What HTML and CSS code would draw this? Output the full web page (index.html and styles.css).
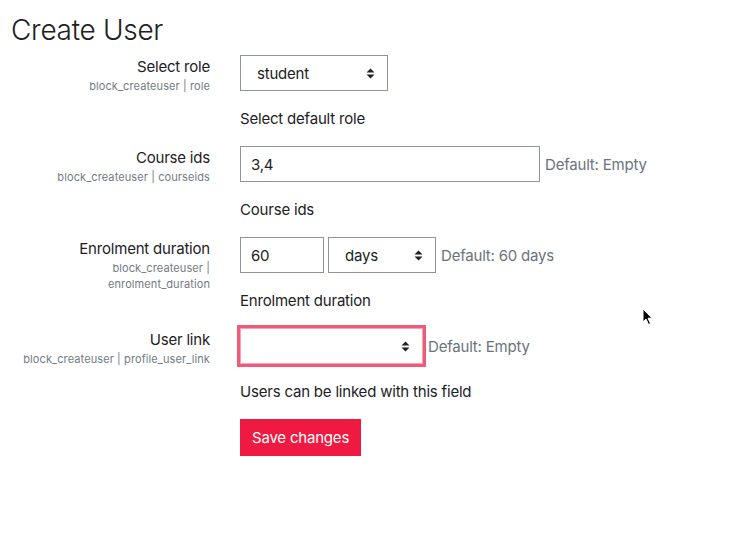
FILE: index.html
```html
<!DOCTYPE html>
<html>
<head>
<meta charset="utf-8">
<link rel="stylesheet" href="styles.css">
</head>
<body>
<div class="page">
  <h1 class="title">Create User</h1>
  <form class="settings">
    <div class="row">
      <div class="label-cell">
        <div class="label">Select role</div>
        <div class="ident">block_createuser | role</div>
      </div>
      <div class="control-cell">
        <div class="controls">
          <div class="select w-role"><span>student</span><svg class="caret" width="9" height="11" viewBox="0 0 9 11"><path d="M4.5 0.5 L8.5 4.5 L0.5 4.5 Z M0.5 6.5 L8.5 6.5 L4.5 10.5 Z" fill="#1d2125"/></svg></div>
        </div>
        <div class="desc">Select default role</div>
      </div>
    </div>

    <div class="row">
      <div class="label-cell">
        <div class="label">Course ids</div>
        <div class="ident">block_createuser | courseids</div>
      </div>
      <div class="control-cell">
        <div class="controls">
          <div class="input w-course">3,4</div>
          <span class="default">Default: Empty</span>
        </div>
        <div class="desc">Course ids</div>
      </div>
    </div>

    <div class="row">
      <div class="label-cell">
        <div class="label">Enrolment duration</div>
        <div class="ident">block_createuser |<br>enrolment_duration</div>
      </div>
      <div class="control-cell">
        <div class="controls">
          <div class="input w-num">60</div>
          <div class="select w-days"><span>days</span><svg class="caret" width="9" height="11" viewBox="0 0 9 11"><path d="M4.5 0.5 L8.5 4.5 L0.5 4.5 Z M0.5 6.5 L8.5 6.5 L4.5 10.5 Z" fill="#1d2125"/></svg></div>
          <span class="default">Default: 60 days</span>
        </div>
        <div class="desc">Enrolment duration</div>
      </div>
    </div>

    <div class="row">
      <div class="label-cell">
        <div class="label">User link</div>
        <div class="ident">block_createuser | profile_user_link</div>
      </div>
      <div class="control-cell">
        <div class="controls">
          <div class="select w-link focused"><span></span><svg class="caret" width="9" height="11" viewBox="0 0 9 11"><path d="M4.5 0.5 L8.5 4.5 L0.5 4.5 Z M0.5 6.5 L8.5 6.5 L4.5 10.5 Z" fill="#1d2125"/></svg></div>
          <span class="default">Default: Empty</span>
        </div>
        <div class="desc">Users can be linked with this field</div>
      </div>
    </div>

    <div class="row">
      <div class="label-cell"></div>
      <div class="control-cell">
        <button type="button" class="btn">Save changes</button>
      </div>
    </div>
  </form>
</div>
<svg class="cursor" width="12" height="18" viewBox="0 0 12 18"><path d="M1 1 L1 14 L4 11 L6.5 16.5 L8.5 15.5 L6 10.2 L10 10.2 Z" fill="#000" stroke="#fff" stroke-width="1"/></svg>
</body>
</html>
```
FILE: styles.css
```css
html, body {
  margin: 0;
  padding: 0;
  background: #ffffff;
}
body {
  font-family: "Inter", "Roboto", "Liberation Sans", sans-serif;
  color: #1d2125;
  font-size: 15px;
  letter-spacing: -0.2px;
}
.page {
  padding: 13px 11px 0 11px;
}
.title {
  margin: 0 0 8px 0;
  font-size: 28px;
  font-weight: 300;
  line-height: 34px;
  letter-spacing: -0.3px;
}
.row {
  display: grid;
  grid-template-columns: 199px 1fr;
  column-gap: 30px;
  margin-bottom: 16px;
}
.label-cell {
  text-align: right;
  padding-top: 1px;
}
.label {
  font-size: 15px;
  line-height: 22px;
}
.ident {
  font-size: 11px;
  line-height: 16px;
  color: #737b83;
  letter-spacing: 0.1px;
}
.controls {
  display: flex;
  align-items: center;
  gap: 4px;
  height: 36px;
}
.desc {
  margin-top: 17px;
  line-height: 22px;
}
.select, .input {
  box-sizing: border-box;
  height: 36px;
  border: 1px solid #8f959e;
  display: flex;
  align-items: center;
  font-size: 15px;
  background: #fff;
}
.select {
  justify-content: space-between;
  padding: 0 12px 0 16px;
}
.input {
  padding: 0 10px;
}
.caret {
  display: block;
}
.w-role { width: 148px; }
.w-days { width: 108px; }
.w-link { width: 183px; }
.w-course { width: 300px; }
.w-num { width: 84px; }
.focused {
  border-color: #f5a3b2;
  box-shadow: 0 0 0 3px #ee5a77;
}
.default {
  color: #6a737b;
  font-size: 15px;
  margin-left: 1px;
}
.btn {
  height: 37px;
  padding: 0 12px;
  border: none;
  background: #ef1a41;
  color: #fff;
  font-family: inherit;
  font-size: 15px;
  letter-spacing: -0.2px;
  cursor: pointer;
}
.cursor {
  position: absolute;
  left: 642px;
  top: 308px;
}
```
